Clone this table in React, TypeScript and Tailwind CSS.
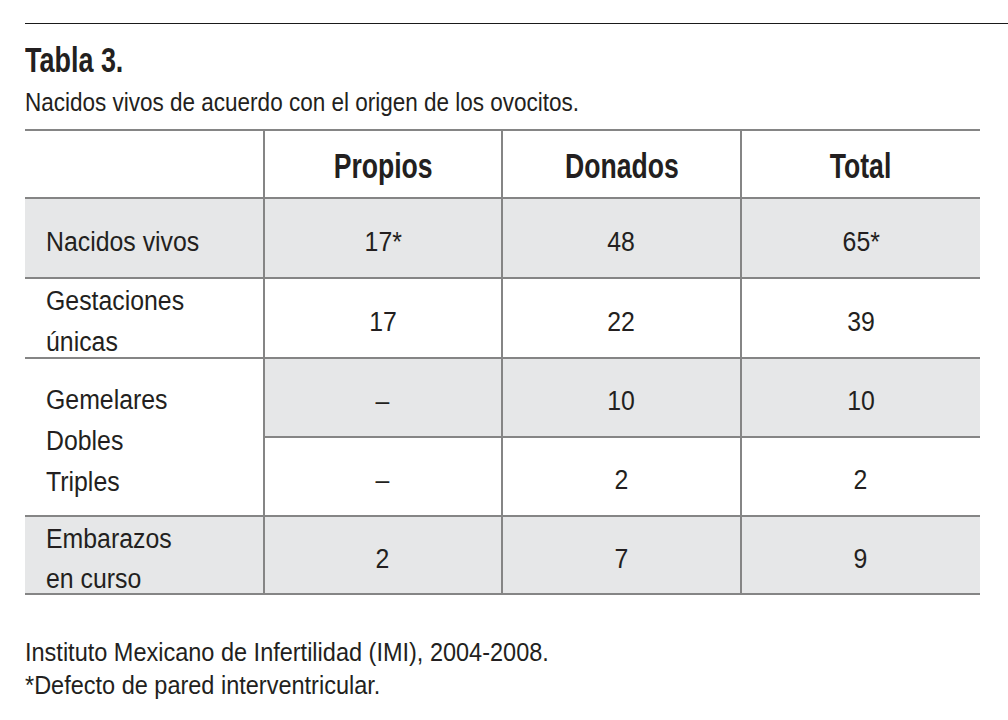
import type { ReactNode } from "react";

// No condensed face is installed, so the condensed type is narrowed with scale-x.
const sans = "font-['Liberation_Sans',Arial,sans-serif]";

function Cell({
  children,
  className = "",
}: {
  children?: ReactNode;
  className?: string;
}) {
  return (
    <div className={`border-b-2 border-[#858585] ${className}`}>{children}</div>
  );
}

function Head({ children }: { children: ReactNode }) {
  return (
    <Cell className="flex items-center justify-center border-l-2 pt-[2px] text-[35px] font-bold leading-none">
      <span className="inline-block scale-x-[0.76]">{children}</span>
    </Cell>
  );
}

function Num({ children, gray }: { children: ReactNode; gray?: boolean }) {
  return (
    <Cell
      className={`flex items-center justify-center border-l-2 pt-2 text-[27px] leading-none ${gray ? "bg-[#e6e7e8]" : ""}`}
    >
      <span className="inline-block scale-x-[0.92]">{children}</span>
    </Cell>
  );
}

function Label({
  children,
  gray,
  className = "",
}: {
  children: ReactNode;
  gray?: boolean;
  className?: string;
}) {
  return (
    <Cell
      className={`flex items-center pl-[21px] pt-2 text-[27px] ${gray ? "bg-[#e6e7e8]" : ""} ${className}`}
    >
      <div className="origin-left scale-x-[0.92] whitespace-nowrap">{children}</div>
    </Cell>
  );
}

export default function App() {
  return (
    <div className={`min-h-[720px] w-[1008px] bg-white pt-[23px] text-[#231f20] ${sans}`}>
      <div className="ml-[25px] h-px bg-[#1a1a1a]" />

      <h1 className="ml-[25px] mt-[18px] text-[35px] font-bold leading-[35px]">
        <span className="inline-block origin-left scale-x-[0.77]">Tabla 3.</span>
      </h1>
      <p className="ml-[25px] mt-[11px] text-[25px] leading-[28px]">
        <span className="inline-block origin-left scale-x-[0.9] whitespace-nowrap">
          Nacidos vivos de acuerdo con el origen de los ovocitos.
        </span>
      </p>

      <div className="ml-[25px] mt-[13px] grid w-[955px] grid-cols-[238px_238px_239px_240px] grid-rows-[68px_80px_80px_79px_79px_78px] border-t-2 border-[#858585]">
        <Cell />
        <Head>Propios</Head>
        <Head>Donados</Head>
        <Head>Total</Head>

        <Label gray className="leading-none">Nacidos vivos</Label>
        <Num gray>17*</Num>
        <Num gray>48</Num>
        <Num gray>65*</Num>

        <Label className="leading-[41px]">
          Gestaciones
          <br />
          únicas
        </Label>
        <Num>17</Num>
        <Num>22</Num>
        <Num>39</Num>

        <Label className="row-span-2 leading-[41px]">
          Gemelares
          <br />
          Dobles
          <br />
          Triples
        </Label>
        <Num gray>–</Num>
        <Num gray>10</Num>
        <Num gray>10</Num>
        <Num>–</Num>
        <Num>2</Num>
        <Num>2</Num>

        <Label gray className="leading-[40px]">
          Embarazos
          <br />
          en curso
        </Label>
        <Num gray>2</Num>
        <Num gray>7</Num>
        <Num gray>9</Num>
      </div>

      <div className="ml-[25px] mt-[41px] text-[25px] leading-[33px]">
        <p>
          <span className="inline-block origin-left scale-x-[0.94] whitespace-nowrap">
            Instituto Mexicano de Infertilidad (IMI), 2004-2008.
          </span>
        </p>
        <p>
          <span className="inline-block origin-left scale-x-[0.94] whitespace-nowrap">
            *Defecto de pared interventricular.
          </span>
        </p>
      </div>
    </div>
  );
}
